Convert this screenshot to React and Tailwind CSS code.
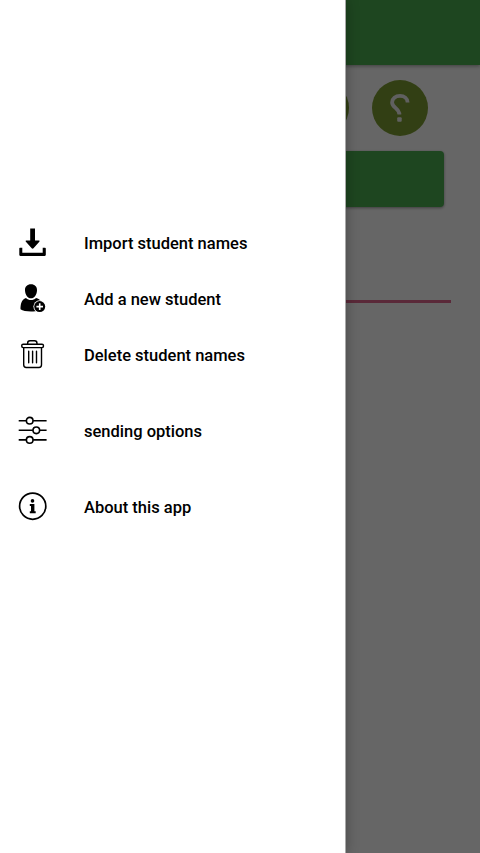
function DownloadIcon() {
  return (
    <svg viewBox="0 0 32 32" className="h-8 w-8">
      <path d="M14.2 2.4H19v12.200h3.800c.8 0 1 .6.5 1.200l-5.800 6.500c-.5.6-1.300.6-1.800 0l-5.800-6.500c-.5-.6-.3-1.200.5-1.200h3.800z" fill="currentColor" />
      <path d="M4 21.700h2.300v5.100h20.400v-5.100H29c.5 0 .8.300.8.800v6.300c0 .7-.4 1.100-1.100 1.100H4.400c-.7 0-1.100-.4-1.100-1.100v-6.300c0-.5.200-.8.700-.8z" fill="currentColor" />
    </svg>
  );
}

function AddUserIcon() {
  return (
    <svg viewBox="0 0 32 32" className="h-8 w-8">
      <path
        d="M15 2.200c3.700 0 6.200 2.300 6 6.200-.2 4.200-2.600 7.900-6 7.900s-5.800-3.700-6-7.900C8.800 4.500 11.300 2.200 15 2.200z"
        fill="currentColor"
      />
      <path
        d="M10 15.900c1.400 1.400 3.100 2 5 2s3.600-.6 5-2c2.200.5 4.200 1.600 5 3.600l-2 9c-2.400.7-5 1-8 1-4.500 0-8.400-.7-10.500-2.200.1-4.900.7-9.900 5.500-11.400z"
        fill="currentColor"
      />
      <circle cx="23.700" cy="24.600" r="6.300" fill="white" />
      <circle cx="23.700" cy="24.600" r="5.500" fill="currentColor" />
      <path d="M23.700 21.300v6.600M20.400 24.600H27" stroke="white" strokeWidth="1.600" />
    </svg>
  );
}

function TrashIcon() {
  return (
    <svg
      viewBox="0 0 32 32"
      className="h-8 w-8"
      fill="none"
      stroke="currentColor"
      strokeWidth="1.400"
      strokeLinecap="round"
      strokeLinejoin="round"
    >
      <path d="M11.600 6.200V5.400c0-1.600.8-2.600 2.400-2.600h4.600c1.600 0 2.400 1 2.400 2.600v.8" />
      <rect x="5.700" y="6.200" width="21.800" height="3.400" rx="1.500" />
      <path d="M7.700 9.800v17c0 1.600.9 2.700 2.500 2.700h12.800c1.600 0 2.500-1.100 2.500-2.700v-17" />
      <path d="M12.700 13.200v11.600M16.600 13.200v11.600M20.500 13.200v11.600" />
    </svg>
  );
}

function SlidersIcon() {
  return (
    <svg viewBox="0 0 32 32" className="h-8 w-8" fill="none" stroke="currentColor" strokeWidth="1.600">
      <path d="M2.700 6.700h7.600m6.800 0h13.500M2.700 16.300h14.200m6.800 0h6.900M2.700 25.900h7.600m6.800 0h13.500" />
      <circle cx="13.700" cy="6.700" r="3.300" />
      <circle cx="20.300" cy="16.300" r="3.300" />
      <circle cx="13.700" cy="25.900" r="3.300" />
    </svg>
  );
}

function InfoIcon() {
  return (
    <svg viewBox="0 0 32 32" className="h-8 w-8">
      <circle cx="16.700" cy="16.200" r="13.100" fill="none" stroke="currentColor" strokeWidth="1.700" />
      <circle cx="16.500" cy="10.900" r="1.800" fill="currentColor" />
      <path d="M13.800 14h4.600v7.200h1.300v2h-5.900v-2h1.200V16h-1.200z" fill="currentColor" />
    </svg>
  );
}

const groups = [
  [
    { label: 'Import student names', Icon: DownloadIcon },
    { label: 'Add a new student', Icon: AddUserIcon },
    { label: 'Delete student names', Icon: TrashIcon },
  ],
  [{ label: 'sending options', Icon: SlidersIcon }],
  [{ label: 'About this app', Icon: InfoIcon }],
];

function RoundButton() {
  return (
    <button className="flex h-14 w-14 items-center justify-center rounded-full bg-[#7e9d32]">
      <svg viewBox="0 0 20 30" className="h-[30px] w-5" fill="none">
        <path
          d="M17.600 9.500C17.600 5.500 14.200 2.900 10 2.900 5.500 2.900 2.100 5.400 2.100 9.400c0 5.200 7.300 5.900 7.300 12.100"
          stroke="#f1f1ef"
          strokeWidth="3.800"
        />
        <rect x="7.200" y="24.200" width="4.500" height="4.500" rx="1" fill="#f1f1ef" />
      </svg>
    </button>
  );
}

export default function App() {
  return (
    <div className="relative h-[853px] w-[480px] overflow-hidden bg-white font-['Roboto',sans-serif]">
      {/* Main screen */}
      <header className="h-[65px] bg-[#4caf50] shadow-[0_1px_4px_rgba(0,0,0,0.4)]" />
      <main className="flex flex-col">
        <div className="flex justify-end gap-[23px] pt-[14.500px] pr-[52px]">
          <RoundButton />
          <RoundButton />
        </div>
        <button className="mt-[15.500px] mr-9 ml-9 h-14 rounded-[4px] bg-[#4caf50] shadow-[0_1px_3px_rgba(0,0,0,0.4)]" />
        <div className="mt-[93px] mr-[29px] ml-[29px] h-[2.500px] bg-[#e0668e]" />
      </main>

      {/* Scrim */}
      <div className="absolute inset-0 bg-black/60" />

      {/* Navigation drawer */}
      <aside className="absolute inset-y-0 left-0 w-[346px] border-r border-[#a8a8a8] bg-white pt-[214px] shadow-[0_0_12px_rgba(0,0,0,0.3)]">
        <nav className="flex flex-col gap-5">
          {groups.map((items) => (
            <ul key={items[0].label}>
              {items.map(({ label, Icon }) => (
                <li key={label} className="flex h-14 items-center gap-9 pl-4 text-black">
                  <Icon />
                  <span className="pt-1 text-[16.500px]/6 font-medium">{label}</span>
                </li>
              ))}
            </ul>
          ))}
        </nav>
      </aside>
    </div>
  );
}
